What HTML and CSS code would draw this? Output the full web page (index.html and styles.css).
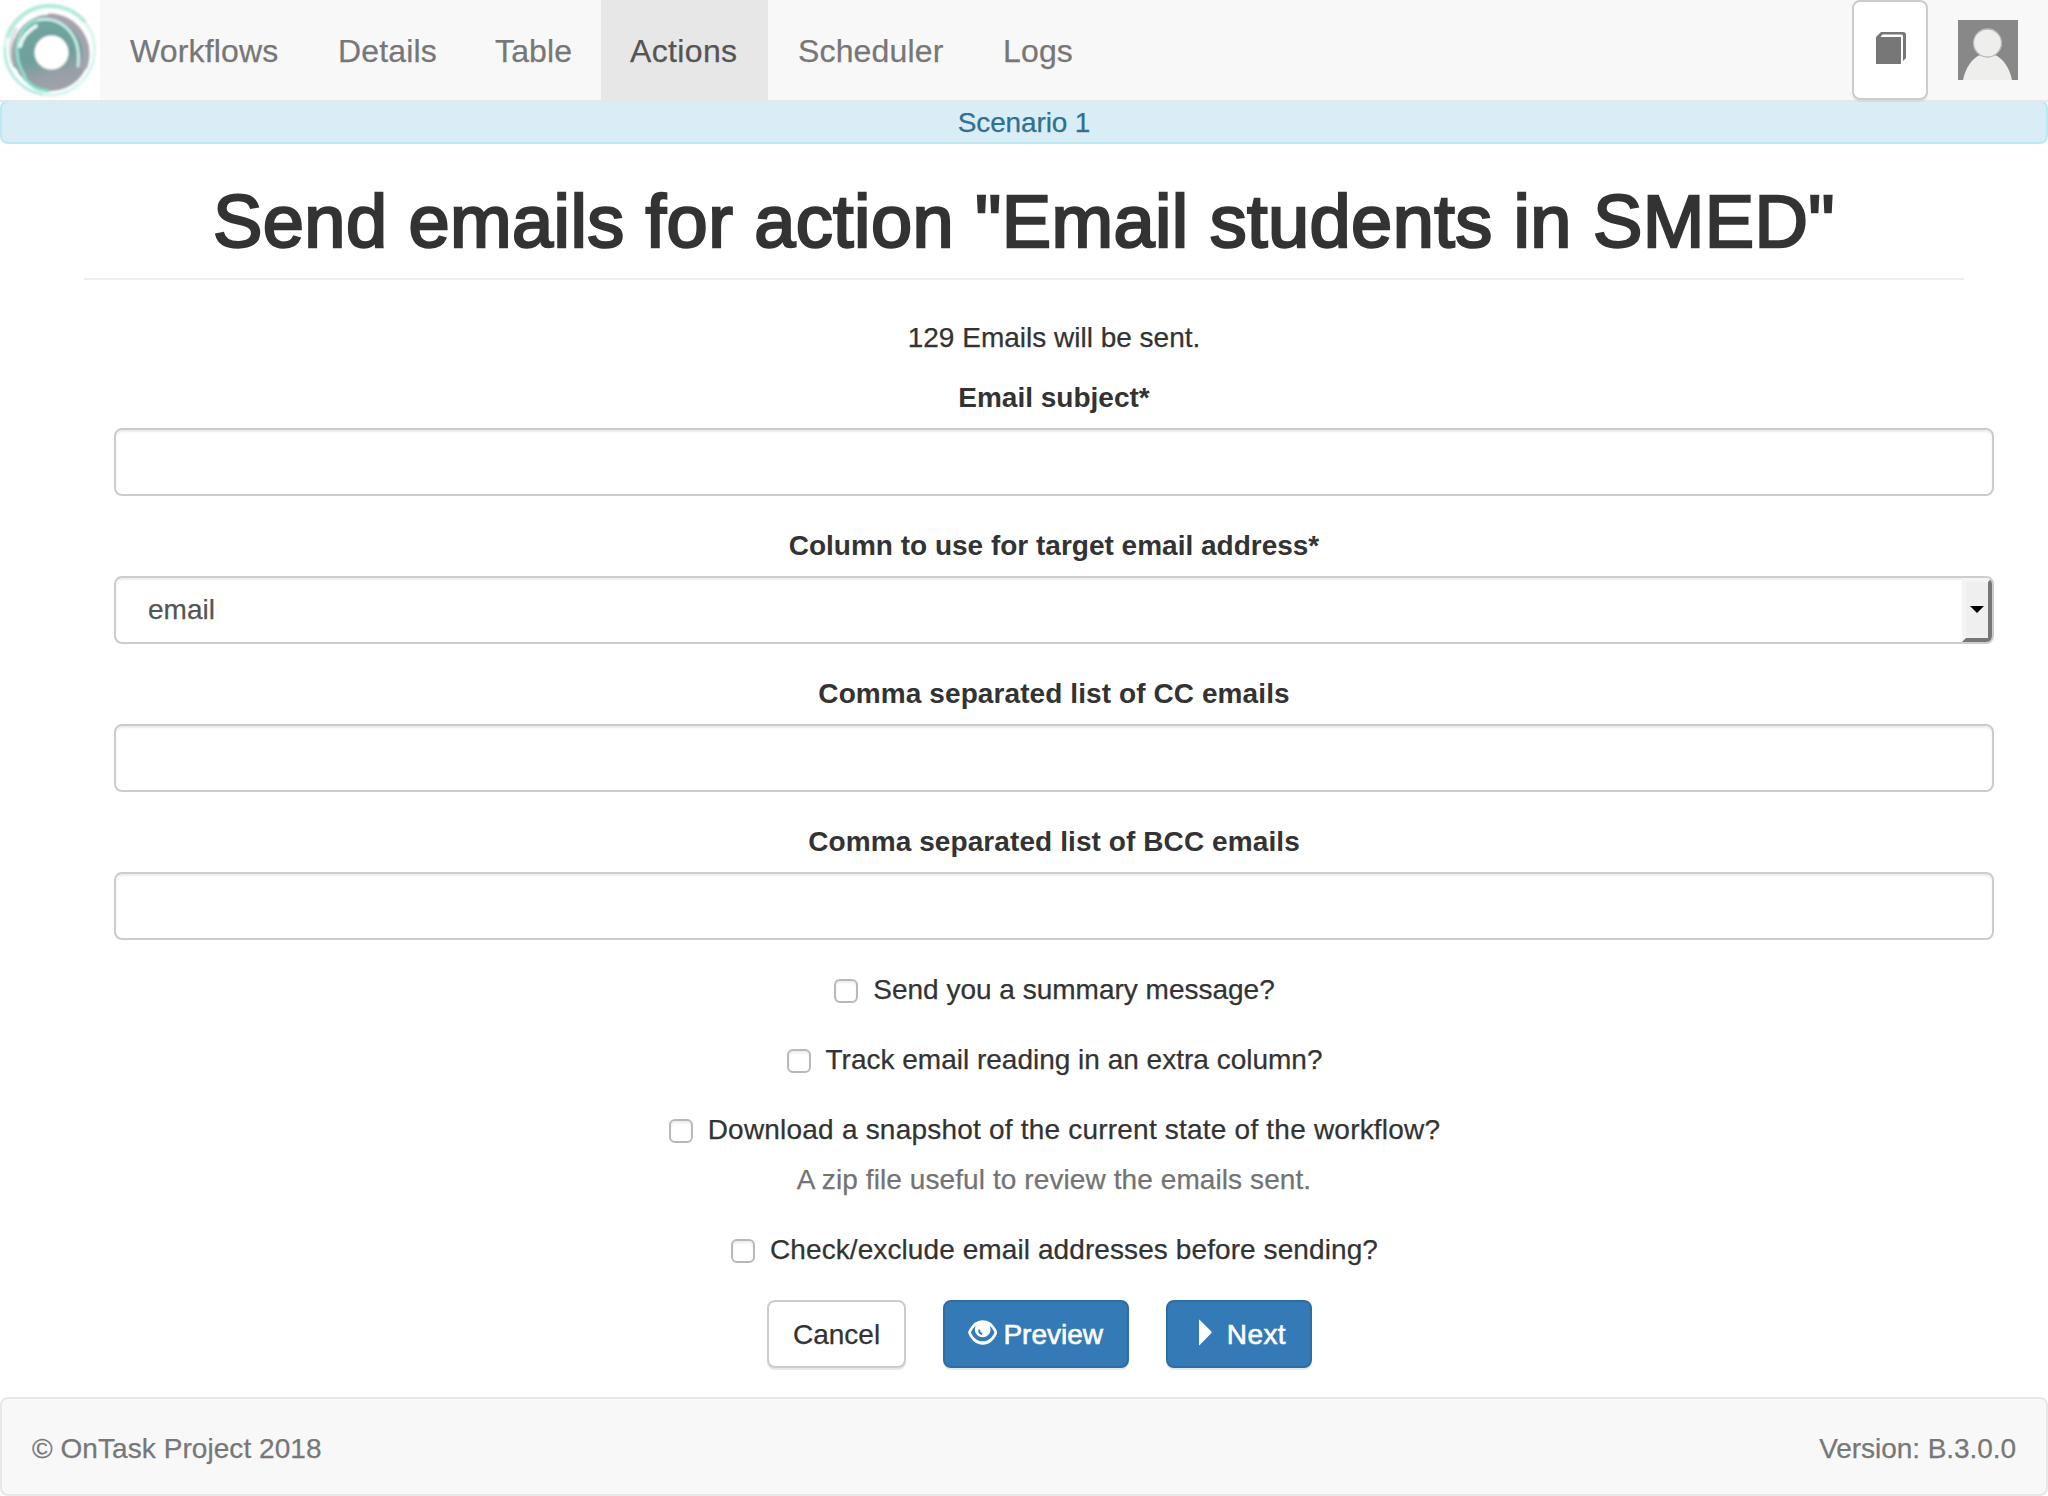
FILE: index.html
```html
<!DOCTYPE html>
<html lang="en">
<head>
<meta charset="utf-8">
<title>OnTask :: Send emails</title>
<link rel="stylesheet" href="styles.css">
</head>
<body>
<nav class="navbar">
  <a class="brand" href="#" aria-label="OnTask">
    <svg viewBox="0 0 100 100" width="100" height="100">
      <defs>
        <linearGradient id="disk" x1="0.3" y1="0" x2="0.55" y2="1">
          <stop offset="0" stop-color="#6fa6a0"/>
          <stop offset="0.55" stop-color="#70a09c"/>
          <stop offset="0.82" stop-color="#9b9fa8"/>
          <stop offset="1" stop-color="#9da2aa"/>
        </linearGradient>
        <filter id="soft" x="-10%" y="-10%" width="120%" height="120%"><feGaussianBlur stdDeviation="1"/></filter>
      </defs>
      <g filter="url(#soft)" fill="none" stroke-linecap="round">
        <circle cx="49.500" cy="50" r="45" stroke="#d9f5ee" stroke-width="3"/>
        <path d="M8 36A45 45 0 0 1 84 21" stroke="#b5eadd" stroke-width="4"/>
        <path d="M5 48A45 45 0 0 0 42 94" stroke="#b2ebdd" stroke-width="2.5"/>
        <path d="M12 62A40 41 0 0 1 16 29" stroke="#dcdde0" stroke-width="3"/>
        <circle cx="51" cy="53" r="38" fill="url(#disk)" stroke="none"/>
        <path d="M50 17A37 37 0 0 1 84 66" stroke="#a5a3ad" stroke-width="7"/>
        <path d="M15 66A38 38 0 0 1 44 17" stroke="#9eabad" stroke-width="4"/>
        <path d="M34 21C60 13 82 34 78 66" stroke="#c5ece4" stroke-width="3"/>
        <path d="M36 20C16 28 11 54 25 77" stroke="#9addd0" stroke-width="3"/>
        <path d="M36 26C27 31 22 38 20 46" stroke="#e2f9f3" stroke-width="4"/>
        <path d="M25 79C32 87 38 90 48 91" stroke="#7fe0cb" stroke-width="3"/>
        <circle cx="51.500" cy="52.500" r="17" fill="#fff" stroke="none"/>
      </g>
    </svg>
  </a>
  <ul class="menu">
    <li><a class="w1" href="#">Workflows</a></li>
    <li><a class="w2" href="#">Details</a></li>
    <li><a class="w3" href="#">Table</a></li>
    <li><a class="w4 active" href="#">Actions</a></li>
    <li><a class="w5" href="#">Scheduler</a></li>
    <li><a class="w6" href="#">Logs</a></li>
  </ul>
  <div class="tools">
    <a class="docs" href="#" aria-label="Documentation">
      <svg viewBox="0 0 30 32" width="30" height="32">
        <path d="M0 32V5L5 0H27Q30 0 30 3V26L27 29V4Q27 2.500 25.500 2.500H6.500L4.500 5H25V32Z" fill="#777"/>
      </svg>
    </a>
    <a class="avatar" href="#" aria-label="Profile">
      <svg viewBox="0 0 60 60" width="60" height="60">
        <rect width="60" height="60" fill="#888"/>
        <path d="M5 60C7 49 14 38 22 35H37C45 38 52 49 54 60Z" fill="#eeeeec"/>
        <circle cx="29.500" cy="23" r="14" fill="#eeeeec" stroke="#b8b8b8" stroke-width="1.300"/>
      </svg>
    </a>
  </div>
</nav>
<div class="workflow">Scenario 1</div>
<main class="page">
  <h1>Send emails for action "Email students in SMED"</h1>
  <form class="form">
    <p class="intro">129 Emails will be sent.</p>
    <div class="group"><label for="subject">Email subject*</label><input id="subject" class="control" type="text"></div>
    <div class="group"><label>Column to use for target email address*</label>
      <div class="control select"><span>email</span><i class="arrow"></i></div></div>
    <div class="group"><label class="wide" for="cc">Comma separated list of CC emails</label><input id="cc" class="control" type="text"></div>
    <div class="group"><label class="wide" for="bcc">Comma separated list of BCC emails</label><input id="bcc" class="control" type="text"></div>
    <label class="check"><input type="checkbox"><span>Send you a summary message?</span></label>
    <label class="check"><input type="checkbox"><span>Track email reading in an extra column?</span></label>
    <label class="check with-help"><input type="checkbox"><span class="wider">Download a snapshot of the current state of the workflow?</span></label>
    <p class="help wide">A zip file useful to review the emails sent.</p>
    <label class="check"><input type="checkbox"><span class="wide">Check/exclude email addresses before sending?</span></label>
    <div class="actions">
      <button type="button" class="btn cancel">Cancel</button>
      <button type="button" class="btn primary preview">
        <svg viewBox="0 0 30 25" width="30" height="25">
          <path d="M15 0C22 0 27 5 30 12.500C27 20 22 25 15 25S3 20 0 12.500C3 5 8 0 15 0Z" fill="#fff"/>
          <path d="M8 5.500C5.500 7.500 4 10 3 12.500C5.500 18 9.500 21.500 15 21.500S24.500 18 27 12.500C26 10 24.500 7.500 22 5.500A8 8 0 1 1 8 5.500Z" fill="#337ab7"/>
          <path d="M11.500 9.500A4 4 0 0 0 14.500 14" stroke="#337ab7" stroke-width="2" fill="none"/>
        </svg>
        <span>Preview</span>
      </button>
      <button type="button" class="btn primary next">
        <svg viewBox="0 0 13 27" width="13" height="27"><path d="M0 .5Q0 0 .8 .8L12.600 12.500Q13 13.500 12.600 14L.8 26.200Q0 27 0 26Z" fill="#fff"/></svg>
        <span>Next</span>
      </button>
    </div>
  </form>
</main>
<footer class="footer"><span class="copy">© OnTask Project 2018</span><span class="version">Version: B.3.0.0</span></footer>
</body>
</html>
```
FILE: styles.css
```css
* { box-sizing: border-box; }
body {
  margin: 0;
  height: 1496px;
  display: flex;
  flex-direction: column;
  overflow: hidden;
  background: #fff;
  color: #333;
  font: 28px/40px "Liberation Sans", Arial, sans-serif;
  -webkit-text-stroke: .25px;
}
a { color: inherit; text-decoration: none; }
svg { display: block; }
p { margin: 0; }

.navbar {
  position: relative;
  z-index: 1;
  display: flex;
  height: 102px;
  background: #f8f8f8;
  border-bottom: 2px solid #e7e7e7;
  color: #777;
  font-size: 32px;
  letter-spacing: .15px;
}
.brand { width: 100px; height: 100px; background: #fff; }
.menu { display: flex; margin: 0; padding: 0 0 0 1px; list-style: none; }
.menu a { display: block; height: 100px; padding: 0 29px; line-height: 102px; white-space: nowrap; }
.menu .w1 { width: 208px; }
.menu .w2 { width: 157px; }
.menu .w3 { width: 135px; }
.menu .w4 { width: 167px; letter-spacing: .35px; }
.menu .w5 { width: 205px; padding-left: 30px; }
.menu .w6 { padding-left: 30px; }
.menu .active { background: #e7e7e7; color: #555; }
.tools { display: flex; margin-left: auto; padding-right: 30px; gap: 30px; }
.docs {
  display: flex;
  width: 76px;
  height: 100px;
  padding: 30px 0 0 22px;
  background: #fff;
  border: 2px solid #ccc;
  border-radius: 8px;
  box-shadow: 0 2px 0 rgba(0,0,0,.06);
}
.avatar { padding-top: 20px; }

.workflow {
  height: 44px;
  margin-top: -2px;
  background: #d9edf7;
  border: 2px solid #bce8f1;
  border-radius: 8px;
  color: #31708f;
  text-align: center;
  line-height: 42px;
  letter-spacing: -.15px;
}

.page { padding: 0 84px; }
h1 {
  height: 136px;
  margin: 0;
  padding-top: 38px;
  border-bottom: 2px solid #eee;
  font-size: 74px;
  font-weight: 400;
  line-height: 80px;
  letter-spacing: .4px;
  text-align: center;
  white-space: nowrap;
  -webkit-text-stroke: 2.4px #333;
}
.form { margin: 38px -30px 0 30px; text-align: center; }
.wide { letter-spacing: .09px; }
.wider { letter-spacing: .21px; }
.intro { height: 60px; }
.group { height: 148px; }
.group label { display: block; height: 50px; font-weight: 700; -webkit-text-stroke: 0; }
.control {
  display: block;
  width: 100%;
  height: 68px;
  border: 2px solid #ccc;
  border-radius: 8px;
  background: #fff;
  box-shadow: inset 0 2px 2px rgba(0,0,0,.075);
  color: #555;
}
.select {
  display: flex;
  justify-content: space-between;
  padding-left: 32px;
  text-align: left;
  line-height: 64px;
  overflow: hidden;
}
.arrow {
  display: flex;
  align-items: center;
  justify-content: center;
  width: 30px;
  padding-bottom: 2px;
  background: #efefef;
  border: 4px solid;
  border-color: #f5f5f5 #777 #777 #f4f4f4;
}
.arrow::after { content: ""; border: 7px solid transparent; border-top-color: #000; border-bottom: 0; }

.check { display: flex; justify-content: center; align-items: center; height: 40px; margin-bottom: 30px; white-space: nowrap; }
.check.with-help { margin-bottom: 10px; }
.check input {
  appearance: none;
  width: 24px;
  height: 24px;
  margin: 1px 15px 0 1px;
  border: 2px solid #b8b8b8;
  border-radius: 6px;
  background: #fff;
  box-shadow: inset 0 2px 2px rgba(0,0,0,.08);
}
.help { height: 70px; color: #737373; }

.actions { display: flex; margin-left: 653px; }
.btn {
  display: flex;
  align-items: flex-start;
  height: 68px;
  padding: 0 24px;
  border: 2px solid #ccc;
  border-radius: 8px;
  background: #fff;
  box-shadow: 0 2px 0 rgba(0,0,0,.09);
  color: #333;
  font: inherit;
  line-height: 65px;
  white-space: nowrap;
}
.btn.primary { background: #337ab7; border-color: #2e6da4; color: #fff; -webkit-text-stroke: .6px #fff; }
.cancel { width: 139px; margin-right: 37px; }
.preview { width: 186px; margin-right: 37px; padding-left: 23px; }
.preview svg { margin: 18px 6px 0 0; }
.next { width: 146px; padding-left: 31px; }
.next svg { margin: 17px 15px 0 0; }
.next span { letter-spacing: .4px; }

.footer {
  display: flex;
  justify-content: space-between;
  height: 99px;
  margin-top: auto;
  padding: 0 30px;
  border: 2px solid #e7e7e7;
  border-radius: 8px;
  background: #f8f8f8;
  color: #777;
  line-height: 100px;
}
.copy { letter-spacing: .06px; }
.version { letter-spacing: -.06px; }
```
